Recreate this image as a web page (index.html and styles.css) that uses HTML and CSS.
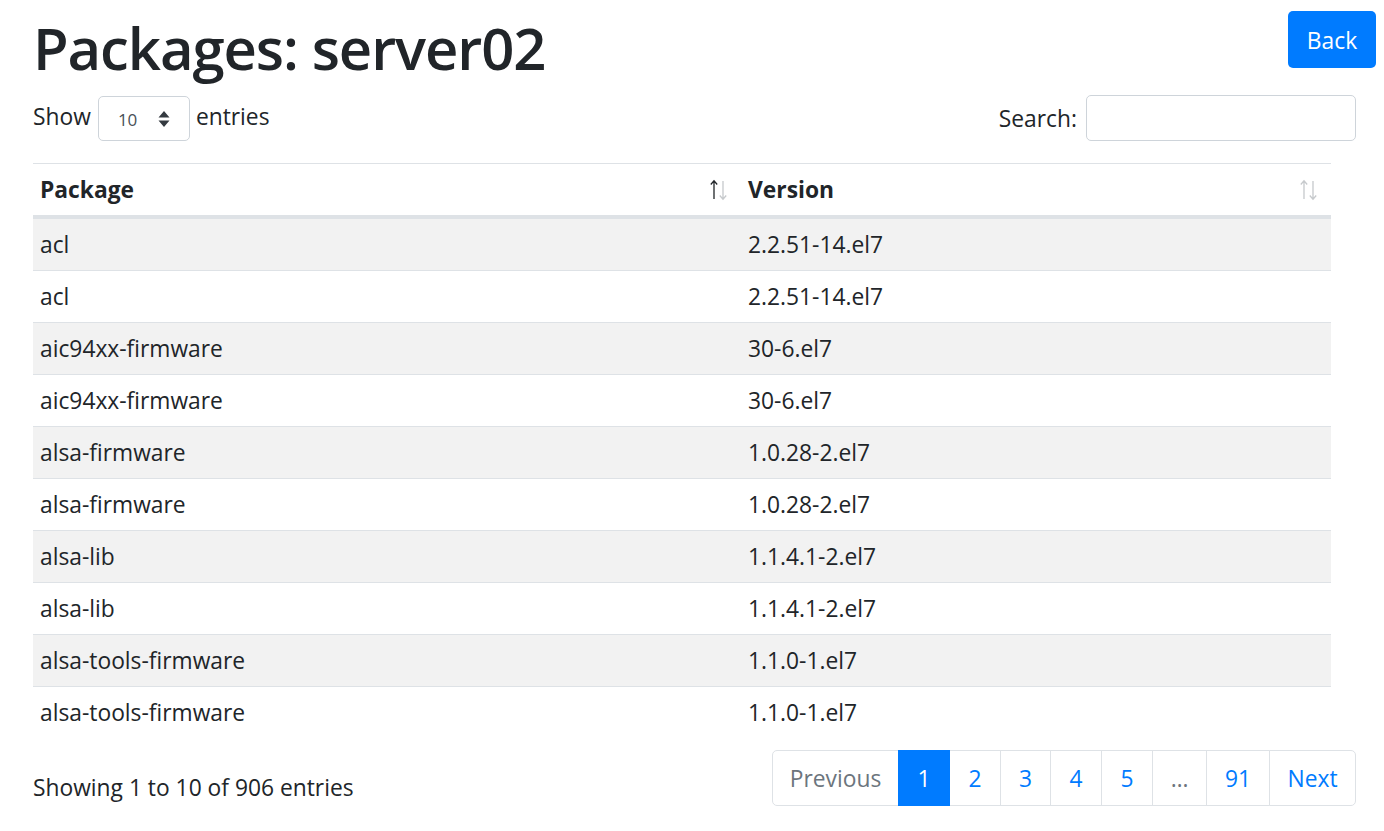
FILE: index.html
```html
<!DOCTYPE html>
<html lang="en">
<head>
<meta charset="utf-8">
<title>Packages: server02</title>
<link rel="stylesheet" href="styles.css">
</head>
<body>
<div class="page">
  <header class="top">
    <h1 class="title">Packages: server02</h1>
    <a class="btn-back" href="#">Back</a>
  </header>
  <div class="content">
    <div class="controls">
      <label class="length"><span class="lbl">Show</span>
        <span class="select">10
          <svg class="select-arrows" width="12" height="18" viewBox="0 0 12 18"><path d="M6 1 L11.5 7.5 H0.5 Z M6 17 L11.5 10.5 H0.5 Z" fill="#343a40"/></svg>
        </span>
        <span class="lbl">entries</span></label>
      <label class="search"><span class="lbl">Search:</span> <input class="search-input" type="search"></label>
    </div>
    <table class="grid">
      <thead>
        <tr>
          <th class="col-pkg"><div class="th-inner"><span>Package</span>
            <svg class="sort" width="20" height="22" viewBox="0 0 20 22"><g fill="none" stroke-width="1.3"><path d="M5 20 V2 M1.8 5.5 L5 1.8 L8.2 5.5" stroke="#212529"/><path d="M14 2 V20 M10.8 16.5 L14 20.2 L17.2 16.5" stroke="#c6c9cc"/></g></svg></div></th>
          <th class="col-ver"><div class="th-inner"><span>Version</span>
            <svg class="sort" width="20" height="22" viewBox="0 0 20 22"><g fill="none" stroke-width="1.3" stroke="#c6c9cc"><path d="M5 20 V2 M1.8 5.5 L5 1.8 L8.2 5.5"/><path d="M14 2 V20 M10.8 16.5 L14 20.2 L17.2 16.5"/></g></svg></div></th>
        </tr>
      </thead>
      <tbody>
        <tr><td>acl</td><td>2.2.51-14.el7</td></tr>
        <tr><td>acl</td><td>2.2.51-14.el7</td></tr>
        <tr><td>aic94xx-firmware</td><td>30-6.el7</td></tr>
        <tr><td>aic94xx-firmware</td><td>30-6.el7</td></tr>
        <tr><td>alsa-firmware</td><td>1.0.28-2.el7</td></tr>
        <tr><td>alsa-firmware</td><td>1.0.28-2.el7</td></tr>
        <tr><td>alsa-lib</td><td>1.1.4.1-2.el7</td></tr>
        <tr><td>alsa-lib</td><td>1.1.4.1-2.el7</td></tr>
        <tr><td>alsa-tools-firmware</td><td>1.1.0-1.el7</td></tr>
        <tr><td>alsa-tools-firmware</td><td>1.1.0-1.el7</td></tr>
      </tbody>
    </table>
    <div class="footer">
      <div class="info">Showing 1 to 10 of 906 entries</div>
      <ul class="pagination">
        <li class="page-item disabled"><a class="page-link pl-prev">Previous</a></li>
        <li class="page-item active"><a class="page-link pl-num">1</a></li>
        <li class="page-item"><a class="page-link pl-num">2</a></li>
        <li class="page-item"><a class="page-link pl-3">3</a></li>
        <li class="page-item"><a class="page-link pl-num">4</a></li>
        <li class="page-item"><a class="page-link pl-num">5</a></li>
        <li class="page-item disabled"><a class="page-link pl-ell">…</a></li>
        <li class="page-item"><a class="page-link pl-91">91</a></li>
        <li class="page-item"><a class="page-link pl-next">Next</a></li>
      </ul>
    </div>
  </div>
</div>
</body>
</html>
```
FILE: styles.css
```css
* { box-sizing: border-box; }
html, body { margin: 0; padding: 0; background: #fff; }
body {
  font-family: "Open Sans", "Liberation Sans", sans-serif;
  font-size: 22.8px;
  line-height: 1.5;
  color: #212529;
}
.page { width: 1384px; }
.top {
  display: flex;
  justify-content: space-between;
  align-items: flex-start;
  padding: 0 8px 0 33px;
  height: 86px;
}
.title {
  margin: 13px 0 0 0;
  font-size: 58px;
  font-weight: 600;
  line-height: 1.2;
  letter-spacing: -1.1px;
}
.btn-back {
  margin-top: 11px;
  width: 88px;
  height: 57px;
  padding-top: 4px;
  display: flex;
  align-items: center;
  justify-content: center;
  background: #007bff;
  color: #fff;
  text-decoration: none;
  border-radius: 5px;
  font-size: 22.8px;
}
.content { padding: 0 28px 0 33px; }
.controls {
  display: flex;
  justify-content: space-between;
  align-items: flex-start;
  height: 77px;
}
.length, .search {
  display: flex;
  align-items: center;
  font-weight: 400;
}
.length { margin-top: 10px; }
.search { margin-top: 9px; }
.length .lbl { margin-top: -2px; }
.search .lbl { margin-top: 3px; }
.select {
  display: inline-flex;
  align-items: center;
  justify-content: space-between;
  width: 92px;
  height: 45px;
  margin: 0 6px 0 7px;
  padding: 3px 19px 0 19px;
  border: 1px solid #ced4da;
  border-radius: 5px;
  font-size: 17px;
  color: #495057;
}
.select-arrows { margin-top: -3px; }
.search-input {
  width: 270px;
  height: 46px;
  margin-left: 9px;
  border: 1px solid #ced4da;
  border-radius: 5px;
  font: inherit;
  padding: 0 12px;
}
.grid {
  width: 1298px;
  border-collapse: collapse;
}
.grid th, .grid td {
  text-align: left;
  vertical-align: top;
  padding: 9px 7px;
  line-height: 33px;
}
.grid th {
  border-top: 1px solid #dee2e6;
  border-bottom: 4px solid #dee2e6;
  font-weight: 700;
}
.col-pkg { width: 708px; }
.th-inner {
  display: flex;
  justify-content: space-between;
  align-items: center;
}
.sort { margin-right: 5px; }
.grid td { border-top: 1px solid #dee2e6; }
.grid tbody tr:nth-child(odd) td { background: #f2f2f2; }
.footer {
  display: flex;
  justify-content: space-between;
  align-items: center;
  margin-top: 12px;
}
.info { padding-top: 20px; }
.pagination {
  display: flex;
  list-style: none;
  margin: 0;
  padding: 0;
}
.page-link {
  display: flex;
  align-items: center;
  justify-content: center;
  height: 56px;
  padding-top: 3px;
  border: 1px solid #dee2e6;
  margin-left: -1px;
  color: #007bff;
  background: #fff;
  text-decoration: none;
}
.page-item:first-child .page-link { margin-left: 0; border-radius: 5px 0 0 5px; }
.page-item:last-child .page-link { border-radius: 0 5px 5px 0; }
.page-item.disabled .page-link { color: #6c757d; }
.page-item.active .page-link {
  background: #007bff;
  border-color: #007bff;
  color: #fff;
  position: relative;
  z-index: 1;
}
.pl-prev { width: 127px; }
.pl-num { width: 52px; }
.pl-3 { width: 51px; }
.pl-ell { width: 55px; }
.pl-91 { width: 64px; }
.pl-next { width: 87px; }
```
